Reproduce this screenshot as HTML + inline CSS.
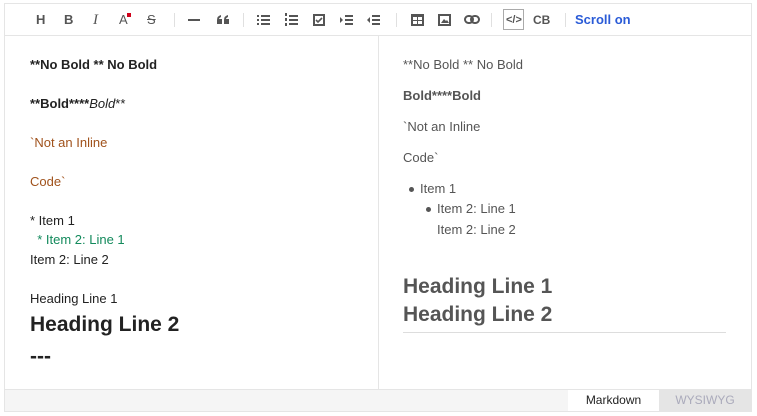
<!DOCTYPE html>
<html><head><meta charset="utf-8"><style>
*{margin:0;padding:0;box-sizing:border-box}
body{width:757px;height:416px;background:#fff;font-family:"Liberation Sans",Arial,sans-serif;position:relative;overflow:hidden}
.frame{position:absolute;left:4px;top:3px;width:748px;height:409px;border:1px solid #e5e5e5}
.tb{position:absolute;left:0;top:0;width:746px;height:32px;border-bottom:1px solid #e5e5e5}
.i{position:absolute;top:8px;font-size:13px;font-weight:bold;color:#555;line-height:16px}
.sep{position:absolute;top:9px;width:1px;height:14px;background:#e0e0e0}
.a{position:absolute;font-size:13px;color:#222;white-space:nowrap}
.split{position:absolute;left:373px;top:32px;width:1px;height:353px;background:#e5e5e5}
.bot{position:absolute;left:0;top:385px;width:746px;height:22px;background:#f5f5f5;border-top:1px solid #e5e5e5}
.r{color:#555}
</style></head><body>
<div class="frame">
<div class="tb">
<span class="i" style="left:31px">H</span>
<span class="i" style="left:59px">B</span>
<span class="i" style="left:88px;font-family:'Liberation Serif';font-style:italic;font-weight:normal;font-size:15px">I</span>
<span class="i" style="left:114px;font-weight:normal">A<span style="position:absolute;left:8px;top:1px;width:4px;height:4px;background:#d0021b"></span></span>
<span class="i" style="left:142px;font-weight:normal;text-decoration:line-through">S</span>
<div class="sep" style="left:169px"></div>
<div style="position:absolute;left:183px;top:15px;width:12px;height:2px;background:#555"></div>
<svg style="position:absolute;left:212px;top:11px" width="12" height="9"><path d="M0 9V5Q0 1 4 0v2Q2 3 2 4h3v5zM7 9V5Q7 1 11 0v2Q9 3 9 4h3v5z" fill="#555"/></svg>
<div class="sep" style="left:238px"></div>
<svg style="position:absolute;left:252px;top:10px" width="14" height="12"><g fill="#555"><rect x="0" y="1" width="2" height="2"/><rect x="0" y="5" width="2" height="2"/><rect x="0" y="9" width="2" height="2"/><rect x="4" y="1" width="9" height="2"/><rect x="4" y="5" width="9" height="2"/><rect x="4" y="9" width="9" height="2"/></g></svg>
<svg style="position:absolute;left:280px;top:9px" width="14" height="13"><g fill="#555"><rect x="0" y="0" width="2" height="3"/><rect x="0" y="5" width="2" height="3"/><rect x="0" y="10" width="2" height="3"/><rect x="4" y="2" width="9" height="2"/><rect x="4" y="6" width="9" height="2"/><rect x="4" y="10" width="9" height="2"/></g></svg>
<svg style="position:absolute;left:308px;top:10px" width="12" height="12"><rect x="1" y="1" width="10" height="10" fill="none" stroke="#555" stroke-width="2"/><path d="M3 6l2 2 4-4" stroke="#555" stroke-width="1.6" fill="none"/></svg>
<svg style="position:absolute;left:335px;top:10px" width="14" height="12"><path d="M0 3l3 3-3 3z" fill="#555"/><g fill="#555"><rect x="5" y="1" width="8" height="2"/><rect x="5" y="5" width="8" height="2"/><rect x="5" y="9" width="8" height="2"/></g></svg>
<svg style="position:absolute;left:362px;top:10px" width="14" height="12"><path d="M3 3l-3 3 3 3z" fill="#555"/><g fill="#555"><rect x="5" y="1" width="8" height="2"/><rect x="5" y="5" width="8" height="2"/><rect x="5" y="9" width="8" height="2"/></g></svg>
<div class="sep" style="left:391px"></div>
<svg style="position:absolute;left:406px;top:10px" width="13" height="12"><rect x="0" y="0" width="13" height="12" fill="#555"/><rect x="2" y="3" width="4" height="3" fill="#fff"/><rect x="7" y="3" width="4" height="3" fill="#fff"/><rect x="2" y="7" width="4" height="3" fill="#fff"/><rect x="7" y="7" width="4" height="3" fill="#fff"/></svg>
<svg style="position:absolute;left:433px;top:10px" width="13" height="12"><rect x="1" y="1" width="11" height="10" fill="none" stroke="#555" stroke-width="2"/><path d="M3 9l3-4 2 2 1-1 2 3z" fill="#555"/></svg>
<svg style="position:absolute;left:459px;top:11px" width="16" height="10"><rect x="1" y="1" width="8" height="7" rx="3.5" fill="none" stroke="#555" stroke-width="2"/><rect x="7" y="1" width="8" height="7" rx="3.5" fill="none" stroke="#555" stroke-width="2"/></svg>
<div class="sep" style="left:486px"></div>
<div style="position:absolute;left:498px;top:5px;width:21px;height:21px;border:1px solid #aaa"></div>
<span class="i" style="left:501px;font-size:11px;top:8px">&lt;/&gt;</span>
<span class="i" style="left:528px;font-size:12px">CB</span>
<div class="sep" style="left:560px"></div>
<span class="i" style="left:570px;color:#2a5bd7">Scroll on</span>
</div>
<div class="split"></div>
<div class="a" style="left:25px;top:53px;font-weight:bold">**No Bold ** No Bold</div>
<div class="a" style="left:25px;top:92px"><b>**Bold****</b><i>Bold</i>**</div>
<div class="a" style="left:25px;top:131px;color:#a0521c">`Not an Inline</div>
<div class="a" style="left:25px;top:170px;color:#a0521c">Code`</div>
<div class="a" style="left:25px;top:209px">* Item 1</div>
<div class="a" style="left:25px;top:228px;color:#138a5c">&nbsp;&nbsp;* Item 2: Line 1</div>
<div class="a" style="left:25px;top:248px">Item 2: Line 2</div>
<div class="a" style="left:25px;top:287px">Heading Line 1</div>
<div class="a" style="left:25px;top:309px;font-size:21px;font-weight:bold">Heading Line 2</div>
<div class="a" style="left:25px;top:341px;font-size:21px;font-weight:bold">---</div>

<div class="a r" style="left:398px;top:53px">**No Bold ** No Bold</div>
<div class="a r" style="left:398px;top:84px;font-weight:bold">Bold****Bold</div>
<div class="a r" style="left:398px;top:115px">`Not an Inline</div>
<div class="a r" style="left:398px;top:146px">Code`</div>
<div style="position:absolute;left:404px;top:183px;width:5px;height:5px;border-radius:50%;background:#555"></div>
<div class="a r" style="left:415px;top:177px">Item 1</div>
<div style="position:absolute;left:421px;top:203px;width:5px;height:5px;border-radius:50%;background:#555"></div>
<div class="a r" style="left:432px;top:197px">Item 2: Line 1</div>
<div class="a r" style="left:432px;top:218px">Item 2: Line 2</div>
<div class="a r" style="left:398px;top:271px;font-size:21px;font-weight:bold">Heading Line 1</div>
<div class="a r" style="left:398px;top:299px;font-size:21px;font-weight:bold">Heading Line 2</div>
<div style="position:absolute;left:398px;top:328px;width:323px;height:1px;background:#ddd"></div>
<div class="bot">
<div style="position:absolute;left:563px;top:0;width:91px;height:21px;background:#fff;font-size:12px;color:#222;text-align:center;line-height:21px">Markdown</div>
<div style="position:absolute;left:654px;top:0;width:92px;height:21px;background:#e5e5e5;font-size:12px;color:#aab;text-align:center;line-height:21px">WYSIWYG</div>
</div>
</div>
</body></html>
